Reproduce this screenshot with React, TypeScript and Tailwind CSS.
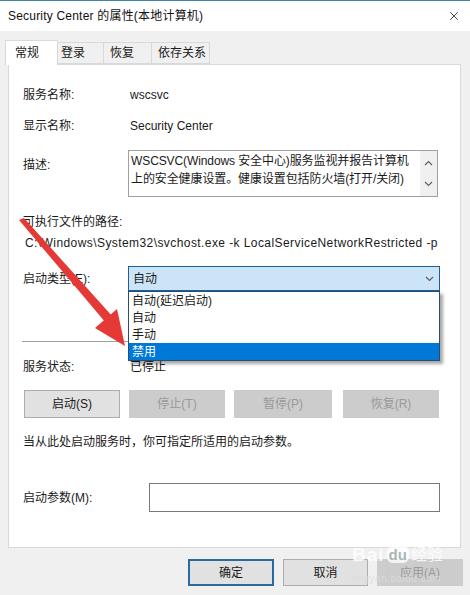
import { X } from "lucide-react";

const font = "font-['Liberation_Sans','Noto_Sans_CJK_SC',sans-serif]";

const Row = ({ label, value, className = "" }: { label: string; value: string; className?: string }) => (
  <div className={`flex items-center h-5 ${className}`}>
    <span className="w-[107px] shrink-0">{label}</span>
    <span>{value}</span>
  </div>
);

const Chevron = ({ up = false }: { up?: boolean }) => (
  <svg width="9" height="6" viewBox="0 0 9 6" className="block">
    <path d={up ? "M1 5 L4.5 1.5 L8 5" : "M1 1 L4.5 4.5 L8 1"} fill="none" stroke="#606060" strokeWidth="1.2" />
  </svg>
);

const Button = ({
  label,
  disabled = false,
  primary = false,
  className = "",
}: {
  label: string;
  disabled?: boolean;
  primary?: boolean;
  className?: string;
}) => (
  <div
    className={`flex items-center justify-center ${className} ${
      disabled
        ? "bg-[#cccccc] text-[#9a9a9a] border border-[#cccccc]"
        : primary
        ? "bg-[#e1e1e1] border-2 border-[#2a6aa0]"
        : "bg-[#e1e1e1] border border-[#adadad]"
    }`}
  >
    {label}
  </div>
);

export default function App() {
  return (
    <div className={`relative w-[470px] h-[595px] overflow-hidden bg-[#f0f0f0] text-[12px] text-[#1a1a1a] ${font}`}>
      {/* title bar */}
      <div className="h-px bg-[#3b86a3]" />
      <div className="h-[30px] bg-white flex items-center justify-between pl-2 pr-[9px]">
        <span className="text-[12px] text-[#111] tracking-[0.2px]">Security Center 的属性(本地计算机)</span>
        <X size={14} strokeWidth={1.2} className="text-black" />
      </div>

      {/* tabs */}
      <div className="pt-[9px] pl-[5px] flex items-end h-[33px]">
        <div className="w-[53px] h-[25px] bg-white border border-b-0 border-[#d9d9d9] flex items-center pl-[9px] relative z-10 -mb-px">
          常规
        </div>
        <div className="w-[46px] h-[22px] border border-l-0 border-[#d9d9d9] flex items-center pl-[3px]">登录</div>
        <div className="w-[48px] h-[22px] border border-l-0 border-[#d9d9d9] flex items-center pl-[6px]">恢复</div>
        <div className="w-[58px] h-[22px] border border-l-0 border-[#d9d9d9] flex items-center pl-[6px]">依存关系</div>
      </div>

      {/* panel */}
      <div className="mx-2 w-[453px] h-[484px] bg-white border border-[#d9d9d9] flex flex-col pl-[14px] pt-[20px]">
        <Row label="服务名称:" value="wscsvc" />
        <Row label="显示名称:" value="Security Center" className="mt-[11px]" />

        <div className="flex mt-[14px] h-[47px]">
          <span className="w-[105px] shrink-0 pt-[5px] leading-5">描述:</span>
          <div className="w-[310px] h-[47px] border border-[#a0a0a0] flex">
            <div className="flex-1 pl-[2px] pt-px leading-[18px] tracking-[-0.1px]">
              WSCSVC(Windows 安全中心)服务监视并报告计算机
              <br />
              上的安全健康设置。健康设置包括防火墙(打开/关闭)
            </div>
            <div className="w-[17px] bg-[#f0f0f0] flex flex-col items-center justify-between py-[9px]">
              <Chevron up />
              <Chevron />
            </div>
          </div>
        </div>

        <div className="mt-[15px] h-5 flex items-center">可执行文件的路径:</div>
        <div className="mt-px h-5 flex items-center pl-[2px] whitespace-nowrap tracking-[0.42px]">
          C:\Windows\System32\svchost.exe -k LocalServiceNetworkRestricted -p
        </div>

        <div className="mt-[13px] flex items-center h-[25px]">
          <span className="w-[105px] shrink-0">启动类型(E):</span>
          <div className="relative w-[312px] h-[25px]">
            <div className="w-full h-full bg-[#cce4f7] border border-[#1d5f96] flex items-center justify-between pl-[4px] pr-[5px]">
              <span>自动</span>
              <Chevron />
            </div>
            {/* dropdown list */}
            <div className="absolute left-0 top-[25px] w-[312px] bg-white border border-[#2a4d6e] shadow-[3px_3px_3px_rgba(0,0,0,0.35)] z-20">
              <div className="h-[17px] flex items-center pl-[3px]">自动(延迟启动)</div>
              <div className="h-[17px] flex items-center pl-[3px]">自动</div>
              <div className="h-[17px] flex items-center pl-[3px]">手动</div>
              <div className="h-[17px] flex items-center pl-[3px] bg-[#0078d7] text-white">禁用</div>
            </div>
          </div>
        </div>

        <div className="mt-[50px] h-px w-[418px] bg-[#a0a0a0] -ml-px" />

        <Row label="服务状态:" value="已停止" className="mt-[15px]" />

        <div className="mt-[13px] flex h-[28px]">
          <Button label="启动(S)" className="w-[96px] ml-px" />
          <Button label="停止(T)" disabled className="w-[96px] ml-[9px]" />
          <Button label="暂停(P)" disabled className="w-[98px] ml-[9px]" />
          <Button label="恢复(R)" disabled className="w-[96px] ml-[11px]" />
        </div>

        <div className="mt-[14px] h-5 flex items-center">当从此处启动服务时，你可指定所适用的启动参数。</div>

        <div className="mt-[31px] flex items-center h-[29px]">
          <span className="w-[126px] shrink-0">启动参数(M):</span>
          <div className="w-[291px] h-[29px] border border-[#7a7a7a] bg-white" />
        </div>
      </div>

      {/* dialog buttons */}
      <div className="mt-[11px] flex justify-end pr-[7px] h-[27px]">
        <Button label="确定" primary className="w-[86px]" />
        <Button label="取消" className="w-[85px] ml-[9px]" />
        <Button label="应用(A)" disabled className="w-[86px] ml-[9px]" />
      </div>

      {/* red arrow annotation */}
      <svg className="absolute left-0 top-0 pointer-events-none z-30" width="470" height="595">
        <path d="M19 220 L24 218 L113 317 L106 323 Z" fill="#e53935" />
        <polygon points="125,346 95,328 117,309" fill="#e53935" />
      </svg>

      {/* watermark */}
      <div className="absolute left-[352px] top-[528px] w-[100px] h-[62px] pointer-events-none z-30 text-white opacity-80">
        <div className="absolute left-[36px] top-0 flex gap-[2px]">
          <span className="w-[5px] h-[6px] rounded-full bg-white" />
          <span className="w-[5px] h-[6px] rounded-full bg-white" />
        </div>
        <div className="absolute left-[32px] top-[7px] flex gap-[12px]">
          <span className="w-[5px] h-[6px] rounded-full bg-white" />
          <span className="w-[5px] h-[6px] rounded-full bg-white" />
        </div>
        <div className="absolute left-0 top-[17px] flex items-center">
          <span className="text-[19px] font-bold leading-none tracking-[1px]">Bai</span>
          <span className="ml-[2px] px-[2px] rounded-[6px] bg-white text-[#9aa] text-[15px] font-bold leading-[17px]">du</span>
          <span className="ml-[2px] text-[16px] leading-none">经验</span>
        </div>
        <div className="absolute left-0 top-[46px] text-[10px] leading-none tracking-[0.5px] text-[#ddd]">jingyan.baidu.com</div>
      </div>
    </div>
  );
}
